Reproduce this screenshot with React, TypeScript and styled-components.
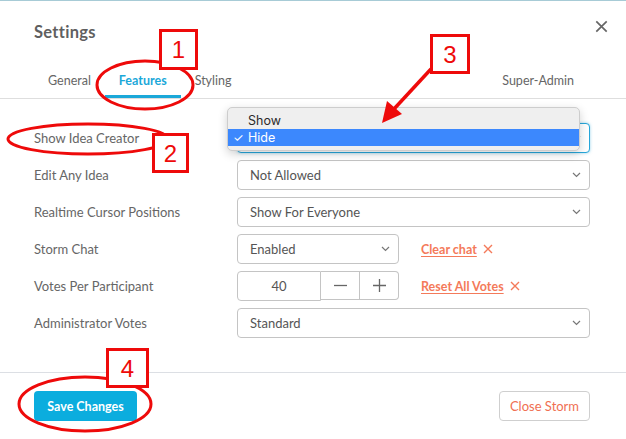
import React from "react";
import styled, { createGlobalStyle } from "styled-components";

const GlobalStyle = createGlobalStyle`
  html, body { margin: 0; padding: 0; background: #fff; }
  body { font-family: Lato, "Open Sans", sans-serif; -webkit-font-smoothing: antialiased; }
  * { box-sizing: border-box; }
`;

const Modal = styled.div`
  position: relative;
  width: 626px;
  height: 439px;
  border-top: 1px solid #a7cbd6;
  background: #fff;
  display: flex;
  flex-direction: column;
`;

const Header = styled.div`
  display: flex;
  justify-content: space-between;
  align-items: flex-start;
  padding: 22px 18px 23px 34px;
`;

const Title = styled.h1`
  margin: 0;
  font-size: 16.5px;
  line-height: 18px;
  font-weight: 700;
  letter-spacing: 0.3px;
  color: #5f5f5f;
`;

const CloseButton = styled.button`
  border: 0;
  background: none;
  padding: 0;
  margin-top: -4px;
  width: 14px;
  height: 14px;
  display: flex;
  align-items: center;
  justify-content: center;
  color: #666;
`;

const TabBar = styled.div`
  display: flex;
  padding: 0 38px 0 34px;
  border-bottom: 1px solid #dedede;
`;

const Tab = styled.div<{ $active?: boolean; $right?: boolean }>`
  padding: 9px 14px 6px;
  font-size: 12.5px;
  line-height: 16px;
  color: ${(p) => (p.$active ? "#1ba8d9" : "#666")};
  font-weight: ${(p) => (p.$active ? 700 : 400)};
  border-bottom: 3px solid ${(p) => (p.$active ? "#1ba8d9" : "transparent")};
  margin-left: ${(p) => (p.$right ? "auto" : "0")};
`;

const Form = styled.div`
  display: flex;
  flex-direction: column;
  gap: 7px;
  padding: 24px 36px 34px 34px;
  position: relative;
`;

const Row = styled.div`
  display: grid;
  grid-template-columns: 203px 1fr;
  align-items: center;
  height: 30px;
`;

const Label = styled.div`
  font-size: 13px;
  color: #666;
  white-space: nowrap;
`;

const Field = styled.div`
  display: flex;
  align-items: center;
`;

const Select = styled.div<{ $width?: number; $focus?: boolean }>`
  width: ${(p) => (p.$width ? `${p.$width}px` : "100%")};
  height: 30px;
  display: flex;
  align-items: center;
  justify-content: space-between;
  padding: 0 8px 0 12px;
  border: 1px solid ${(p) => (p.$focus ? "#27a6d9" : "#c4c4c4")};
  border-radius: 4px;
  box-shadow: ${(p) => (p.$focus ? "0 0 3px rgba(39,166,217,0.5)" : "none")};
  font-size: 13px;
  color: #555;
  background: #fff;
`;

const Stepper = styled.div`
  display: flex;
  height: 30px;
`;

const NumberBox = styled.div`
  width: 84px;
  height: 30px;
  border: 1px solid #c4c4c4;
  border-radius: 4px 0 0 4px;
  display: flex;
  align-items: center;
  justify-content: center;
  font-size: 13px;
  color: #555;
`;

const StepButton = styled.div<{ $last?: boolean }>`
  width: 39px;
  height: 29px;
  border: 1px solid #c4c4c4;
  border-left: 0;
  border-radius: ${(p) => (p.$last ? "0 4px 4px 0" : "0")};
  display: flex;
  align-items: center;
  justify-content: center;
  color: #666;
`;

const DangerLink = styled.a`
  margin-left: 22px;
  display: flex;
  align-items: center;
  gap: 6px;
  font-size: 12.5px;
  font-weight: 700;
  color: #f47a5a;
  text-decoration: underline;
  text-underline-offset: 2px;
  cursor: pointer;
`;

const Menu = styled.div`
  position: absolute;
  left: 227px;
  top: 8px;
  width: 353px;
  padding: 4px 0;
  background: #efefef;
  border: 1px solid #cdcdcd;
  border-radius: 5px;
  box-shadow: 0 3px 10px rgba(0, 0, 0, 0.18);
  font-family: Inter, "Liberation Sans", sans-serif;
  z-index: 2;
`;

const MenuItem = styled.div<{ $selected?: boolean }>`
  position: relative;
  height: 17px;
  line-height: 17px;
  padding-left: 20px;
  font-size: 12.5px;
  color: ${(p) => (p.$selected ? "#fff" : "#2b2b2b")};
  background: ${(p) => (p.$selected ? "#3c88fd" : "transparent")};
`;

const Check = styled.span`
  position: absolute;
  left: 5px;
  top: 0;
  font-size: 12px;
`;

const Footer = styled.div`
  margin-top: auto;
  border-top: 1px solid #dcdfe4;
  display: flex;
  justify-content: space-between;
  padding: 18px 36px 18px 34px;
`;

const PrimaryButton = styled.button`
  width: 103px;
  height: 30px;
  border: 0;
  border-radius: 4px;
  background: #0badde;
  color: #fff;
  font-family: Lato, sans-serif;
  font-weight: 700;
  font-size: 12.5px;
`;

const OutlineButton = styled.button`
  width: 91px;
  height: 30px;
  border: 1px solid #cfcfcf;
  border-radius: 4px;
  background: #fff;
  color: #f06f52;
  font-family: Lato, sans-serif;
  font-size: 13px;
`;

const Overlay = styled.svg`
  position: absolute;
  left: 0;
  top: 0;
  pointer-events: none;
  z-index: 5;
`;

const Chevron = () => (
  <svg width="9" height="6" viewBox="0 0 9 6">
    <path d="M1 1l3.5 3.5L8 1" fill="none" stroke="#777" strokeWidth="1.2" />
  </svg>
);

const XIcon = ({ size = 10, color = "#f47a5a", w = 1.4 }: { size?: number; color?: string; w?: number }) => (
  <svg width={size} height={size} viewBox="0 0 10 10">
    <path d="M1 1l8 8M9 1l-8 8" stroke={color} strokeWidth={w} />
  </svg>
);

const RED = "#ee0a0a";

const NumberBoxMark = ({ x, y, w, h, n }: { x: number; y: number; w: number; h: number; n: string }) => (
  <g>
    <rect x={x} y={y} width={w} height={h} fill="#fff" stroke={RED} strokeWidth="3" />
    <text
      x={x + w / 2}
      y={y + h / 2 + 8.5}
      textAnchor="middle"
      fontFamily="'Liberation Sans', Arial, sans-serif"
      fontSize="24"
      fill={RED}
    >
      {n}
    </text>
  </g>
);

export default function App() {
  return (
    <>
      <GlobalStyle />
      <Modal>
        <Header>
          <Title>Settings</Title>
          <CloseButton aria-label="close">
            <XIcon size={13} color="#666" w={1.3} />
          </CloseButton>
        </Header>
        <TabBar>
          <Tab>General</Tab>
          <Tab $active>Features</Tab>
          <Tab>Styling</Tab>
          <Tab $right>Super-Admin</Tab>
        </TabBar>
        <Form>
          <Menu>
            <MenuItem>Show</MenuItem>
            <MenuItem $selected>
              <Check>✓</Check>Hide
            </MenuItem>
          </Menu>
          <Row>
            <Label>Show Idea Creator</Label>
            <Field>
              <Select $focus aria-label="Hide">
                <span />
                <Chevron />
              </Select>
            </Field>
          </Row>
          <Row>
            <Label>Edit Any Idea</Label>
            <Field>
              <Select>
                <span>Not Allowed</span>
                <Chevron />
              </Select>
            </Field>
          </Row>
          <Row>
            <Label>Realtime Cursor Positions</Label>
            <Field>
              <Select>
                <span>Show For Everyone</span>
                <Chevron />
              </Select>
            </Field>
          </Row>
          <Row>
            <Label>Storm Chat</Label>
            <Field>
              <Select $width={162}>
                <span>Enabled</span>
                <Chevron />
              </Select>
              <DangerLink>
                Clear chat <XIcon />
              </DangerLink>
            </Field>
          </Row>
          <Row>
            <Label>Votes Per Participant</Label>
            <Field>
              <Stepper>
                <NumberBox>40</NumberBox>
                <StepButton>
                  <svg width="13" height="13" viewBox="0 0 13 13">
                    <path d="M0 6.5h13" stroke="#666" strokeWidth="1.3" />
                  </svg>
                </StepButton>
                <StepButton $last>
                  <svg width="13" height="13" viewBox="0 0 13 13">
                    <path d="M0 6.5h13M6.5 0v13" stroke="#666" strokeWidth="1.3" />
                  </svg>
                </StepButton>
              </Stepper>
              <DangerLink>
                Reset All Votes <XIcon />
              </DangerLink>
            </Field>
          </Row>
          <Row>
            <Label>Administrator Votes</Label>
            <Field>
              <Select>
                <span>Standard</span>
                <Chevron />
              </Select>
            </Field>
          </Row>
        </Form>
        <Footer>
          <PrimaryButton>Save Changes</PrimaryButton>
          <OutlineButton>Close Storm</OutlineButton>
        </Footer>
        <Overlay width="626" height="439" viewBox="0 0 626 439">
          <ellipse cx="145" cy="84" rx="48" ry="24" fill="none" stroke={RED} strokeWidth="3" />
          <ellipse cx="88" cy="138" rx="80" ry="15" fill="none" stroke={RED} strokeWidth="3" />
          <ellipse cx="85" cy="403" rx="66" ry="27" fill="none" stroke={RED} strokeWidth="3" />
          <NumberBoxMark x={160.5} y={29.5} w={36} h={38} n="1" />
          <NumberBoxMark x={153.5} y={133.5} w={34} h={37} n="2" />
          <NumberBoxMark x={431.5} y={34.5} w={37} h={37} n="3" />
          <NumberBoxMark x={107.5} y={348.5} w={40} h={37} n="4" />
          <line x1="431" y1="68" x2="394" y2="108" stroke={RED} strokeWidth="3.5" />
          <polygon points="382,122 402,113 387,100" fill={RED} />
        </Overlay>
      </Modal>
    </>
  );
}
